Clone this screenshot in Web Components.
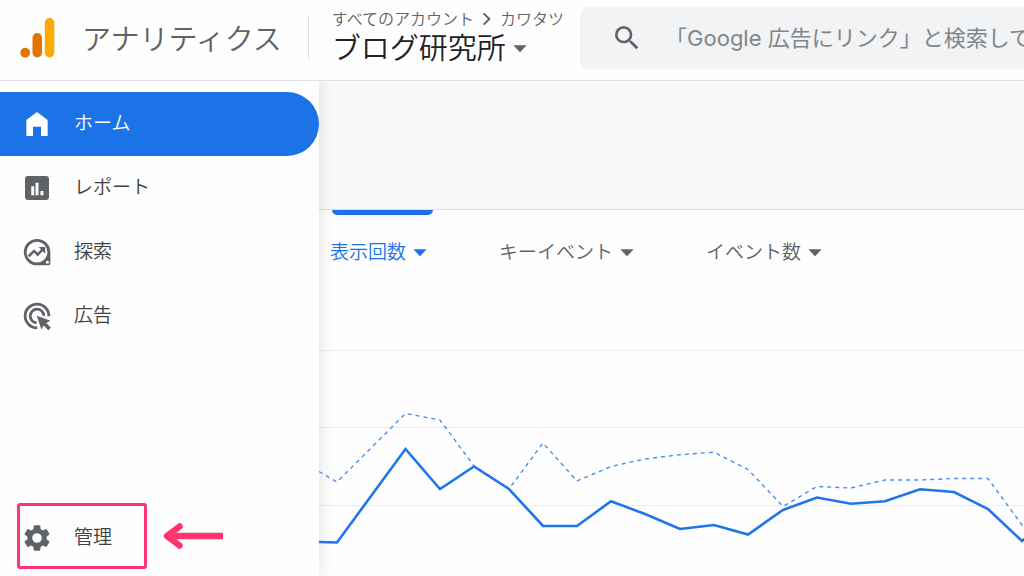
<!DOCTYPE html>
<html lang="ja">
<head>
<meta charset="utf-8">
<meta name="viewport" content="width=device-width, initial-scale=1">
<title>アナリティクス</title>
<style>
  html, body { height: 100%; margin: 0; }
  body {
    background: #fefefe;
    color: #3c4043;
    font-family: Inter, "Noto Sans CJK JP", sans-serif;
    font-weight: 350;
    overflow: hidden;
  }
</style>
</head>
<body>
<ga-app></ga-app>

<script>
class Base extends HTMLElement {
  connectedCallback() {
    if (this.shadowRoot) return;
    this.attachShadow({ mode: 'open' }).innerHTML = this.render();
  }
}

const ICONS = {
  home: '<path d="M12 3 4 9v12h5v-7h6v7h5V9z"/>',
  report: '<path d="M19 3H5c-1.1 0-2 .9-2 2v14c0 1.1.9 2 2 2h14c1.1 0 2-.9 2-2V5c0-1.1-.9-2-2-2zM9.900 17.500H7.700v-6.800h2.200zm3.200 0h-2.200V8h2.200zm3.700 0h-2.200v-3.300h2.200z"/>',
  explore: '<path fill-rule="evenodd" d="M12 2.200a9.900 9.900 0 1 0 0 19.800h8.700c.8 0 1.300-.5 1.300-1.300V12.100A9.950 9.950 0 0 0 12 2.200zm0 2.100a7.800 7.800 0 1 1 0 15.600 7.800 7.800 0 0 1 0-15.600zm7.800 14.200a1.200 1.200 0 1 1 0 2.400 1.200 1.200 0 0 1 0-2.400z"/><path d="m5.800 15.200 4-4 2.700 2.800 4.300-4.600" fill="none" stroke="currentColor" stroke-width="1.900"/><path d="M13.200 8.300h5v5z"/>',
  ads: '<g fill="none" stroke="currentColor" stroke-width="2.100"><path d="M20.900 12.200A8.900 8.900 0 1 0 12.200 20.900"/><path d="M17.100 11.800A5.100 5.100 0 1 0 11.700 17.100"/></g><path d="m11.800 11.800 10.300 3.700-3.200 1.700 3.500 3.500-1.900 1.900-3.500-3.500-1.700 3.100z"/>',
  settings: '<path d="M19.140 12.940c.04-.3.06-.61.06-.94 0-.32-.02-.64-.07-.94l2.030-1.580a.49.49 0 0 0 .12-.61l-1.920-3.320a.488.488 0 0 0-.59-.22l-2.390.96c-.5-.38-1.030-.7-1.620-.94l-.36-2.540a.484.484 0 0 0-.48-.41h-3.840c-.24 0-.43.17-.47.41l-.36 2.540c-.59.24-1.130.57-1.620.94l-2.390-.96c-.22-.08-.47 0-.59.22L2.740 8.870c-.12.21-.08.47.12.61l2.030 1.580c-.05.3-.09.63-.09.94s.02.64.07.94l-2.030 1.580a.49.49 0 0 0-.12.61l1.920 3.320c.12.22.37.29.59.22l2.390-.96c.5.38 1.030.7 1.620.94l.36 2.540c.05.24.24.41.48.41h3.840c.24 0 .44-.17.47-.41l.36-2.540c.59-.24 1.130-.56 1.620-.94l2.390.96c.22.08.47 0 .59-.22l1.920-3.320c.12-.22.07-.47-.12-.61l-2.010-1.580zM12 15.600A3.600 3.600 0 1 1 12 8.400a3.600 3.600 0 0 1 0 7.200z"/>',
  search: '<path d="M15.500 14h-.79l-.28-.27A6.471 6.471 0 0 0 16 9.500 6.500 6.500 0 1 0 9.500 16c1.610 0 3.090-.59 4.230-1.570l.27.28v.79l5 4.990L20.490 19l-4.990-5zm-6 0C7.010 14 5 11.990 5 9.500S7.010 5 9.500 5 14 7.010 14 9.500 11.990 14 9.500 14z"/>',
  chevron: '<path d="m7 3.500 8.500 8.500L7 20.500" fill="none" stroke="currentColor" stroke-width="3"/>',
  caret: '<path d="M2 6.500h20L12 17z"/>'
};

customElements.define('ga-icon', class extends Base {
  render() {
    return `<style>
      :host { display: block; flex: none; width: var(--size, 32px); height: var(--size, 32px); }
      svg { display: block; width: 100%; height: 100%; fill: currentColor; }
    </style><svg viewBox="0 0 24 24" aria-hidden="true">${ICONS[this.getAttribute('name')]}</svg>`;
  }
});

customElements.define('ga-brand', class extends Base {
  render() {
    return `<style>
      :host { display: flex; align-items: center; gap: 27px; padding: 0 26px 0 20px; color: #5f6368; }
      svg { display: block; flex: none; width: 35px; height: 40px; }
      span { padding-top: 4px; font-size: 29px; line-height: 40px; white-space: nowrap; }
    </style>
    <svg viewBox="0 0 35 40" aria-hidden="true">
      <circle cx="5.200" cy="34.700" r="4.900" fill="#e37400"/>
      <rect x="12.500" y="15" width="9.500" height="24.500" rx="4.700" fill="#e37400"/>
      <rect x="24.800" y="0" width="9.500" height="39.500" rx="4.700" fill="#f9ab00"/>
    </svg>
    <span><slot></slot></span>`;
  }
});

customElements.define('ga-property-picker', class extends Base {
  render() {
    return `<style>
      :host { display: flex; align-items: center; }
      :host::before { content: ""; width: 1px; height: 42px; background: #dadce0; }
      button {
        display: grid; justify-items: start; align-content: center; height: 64px; padding: 0 0 0 23px;
        border: 0; background: none;
        font: inherit; color: #202124; white-space: nowrap; cursor: pointer; text-align: left;
      }
      .path { display: flex; align-items: center; gap: 5px; font-size: 16px; line-height: 20px; color: #5f6368; }
      .name { display: flex; align-items: center; gap: 6px; padding-top: 2px; font-size: 29px; line-height: 36px; }
      ga-icon { --size: 16px; color: #5f6368; }
    </style>
    <button type="button" aria-haspopup="dialog">
      <span class="path"><slot name="account"></slot><ga-icon name="chevron"></ga-icon><slot name="owner"></slot></span>
      <span class="name"><slot></slot><ga-icon name="caret"></ga-icon></span>
    </button>`;
  }
});

customElements.define('ga-search', class extends Base {
  render() {
    return `<style>
      :host { display: block; min-width: 0; }
      label {
        display: flex; align-items: center; gap: 22px; height: 62px; padding-left: 31px;
        background: #f1f3f4; border-radius: 8px 0 0 8px; color: #5f6368;
      }
      input {
        flex: 1; min-width: 0; height: 40px; padding: 0; border: 0; outline: 0; background: none;
        font: inherit; font-size: 22px; font-weight: 400; color: #3c4043;
      }
      input::placeholder { color: #80868b; opacity: 1; }
    </style>
    <label><ga-icon name="search"></ga-icon>
      <input type="text" aria-label="検索" placeholder="${this.getAttribute('placeholder')}"></label>`;
  }
});

customElements.define('ga-header', class extends Base {
  render() {
    return `<style>
      :host {
        display: grid; grid-template-columns: auto auto 1fr; align-items: center;
        height: 80px; box-sizing: border-box; padding-bottom: 4px;
        background: #fefefe; box-shadow: 0 1px #dfe1e8; position: relative; z-index: 2;
      }
      ga-search { margin-left: 16px; }
    </style>
    <ga-brand>アナリティクス</ga-brand>
    <ga-property-picker><span slot="account">すべてのアカウント</span><span slot="owner">カワタツ</span>ブログ研究所</ga-property-picker>
    <ga-search placeholder="「Google 広告にリンク」と検索して"></ga-search>`;
  }
});

customElements.define('ga-nav-item', class extends Base {
  render() {
    return `<style>
      :host { display: block; position: relative; }
      a {
        display: flex; align-items: center; gap: 21px; height: 64px; padding-left: 21px;
        color: #5f6368; text-decoration: none; border-radius: 0 32px 32px 0;
      }
      span { font-size: 19px; line-height: 28px; color: #3c4043; }
      :host([active]) a { background: #1c73e8; color: #fff; }
      :host([active]) span { color: #fff; }
    </style>
    <a href="#${this.getAttribute('icon')}"${this.hasAttribute('active') ? ' aria-current="page"' : ''}>
      <ga-icon name="${this.getAttribute('icon')}"></ga-icon><span><slot></slot></span></a>
    <slot name="callout"></slot>`;
  }
});

customElements.define('ga-callout', class extends Base {
  render() {
    return `<style>
      :host { position: absolute; left: 17px; top: -3px; display: flex; align-items: center; gap: 16px; pointer-events: none; }
      .frame { box-sizing: border-box; width: 130px; height: 66px; border: 3px solid #ff3571; border-radius: 3px; }
      svg { display: block; width: 62px; height: 28px; }
    </style>
    <div class="frame"></div>
    <svg viewBox="0 0 62 28" fill="none" stroke="#ff3571" stroke-width="6.500" aria-hidden="true">
      <path d="M4 14h56"/><path d="M16.500 4.500 4 14l12.500 9.500" stroke-linecap="round" stroke-linejoin="round"/>
    </svg>`;
  }
});

customElements.define('ga-sidebar', class extends Base {
  render() {
    return `<style>
      :host { display: block; background: #fefefe; box-shadow: 0 0 14px rgba(60,64,67,.16); position: relative; z-index: 1; }
      nav { display: flex; flex-direction: column; box-sizing: border-box; height: 100%; padding: 12px 0 6px; }
      .last { margin-top: auto; }
    </style>
    <nav aria-label="メイン">
      <ga-nav-item icon="home" active>ホーム</ga-nav-item>
      <ga-nav-item icon="report">レポート</ga-nav-item>
      <ga-nav-item icon="explore">探索</ga-nav-item>
      <ga-nav-item icon="ads">広告</ga-nav-item>
      <ga-nav-item class="last" icon="settings">管理<ga-callout slot="callout"></ga-callout></ga-nav-item>
    </nav>`;
  }
});

customElements.define('ga-metric-tab', class extends Base {
  render() {
    return `<style>
      :host { display: block; color: #5f6368; }
      :host([active]) { color: #1a73e8; }
      button {
        display: flex; align-items: center; gap: 6px; height: 86px; padding: 0;
        border: 0; background: none; font: inherit; font-size: 19px; line-height: 28px;
        color: inherit; white-space: nowrap; cursor: pointer; position: relative;
      }
      ga-icon { --size: 16px; }
      :host([active]) button::before {
        content: ""; position: absolute; top: 0; left: 2px; right: -5px; height: 5px;
        background: #1a73e8; border-radius: 0 0 5px 5px;
      }
    </style>
    <button type="button" aria-haspopup="menu"><slot></slot><ga-icon name="caret"></ga-icon></button>`;
  }
});

customElements.define('ga-line-chart', class extends Base {
  render() {
    const now = '-1,252 17,252.500 85.500,159 120,199 154,176.500 189,199 223,236 257,236 291,211.200 325,224 360,239 394,235 428,244.500 463,220 497,207.500 531,213.800 565,211.200 600,199.300 634,202 668,219 702,251 710,245';
    const prev = '-1,181.500 17,192 85.500,123.500 120,130 154,176 189,199 223,153 257,191 291,176.500 325,169 360,164.700 394,162.200 428,179.500 463,216.500 497,196.500 531,198 565,190 600,190 634,188.500 668,188.500 702,235 710,238';
    return `<style>
      :host { display: block; flex: 1; min-height: 0; }
      svg { display: block; width: 100%; height: 100%; }
    </style>
    <svg viewBox="-1 0 705 286" preserveAspectRatio="xMinYMin slice" role="img" aria-label="表示回数の推移" fill="none">
      <path d="M-1 60.500h705M-1 137.500h705M-1 215.500h705" stroke="#ececec"/>
      <polyline points="${prev}" stroke="#4a8df0" stroke-width="1.400" stroke-dasharray="4 4"/>
      <polyline points="${now}" stroke="#1f76eb" stroke-width="2.600"/>
    </svg>`;
  }
});

customElements.define('ga-main', class extends Base {
  render() {
    return `<style>
      :host { display: flex; flex-direction: column; min-width: 0; min-height: 0; }
      .toolbar { flex: none; box-sizing: border-box; height: 130px; background: #f9f9f9; border-bottom: 1px solid #dcdcde; }
      .tabs { flex: none; display: flex; gap: 71px; height: 80px; padding-left: 11px; }
    </style>
    <div class="toolbar"></div>
    <div class="tabs">
      <ga-metric-tab active>表示回数</ga-metric-tab>
      <ga-metric-tab>キーイベント</ga-metric-tab>
      <ga-metric-tab>イベント数</ga-metric-tab>
    </div>
    <ga-line-chart></ga-line-chart>`;
  }
});

customElements.define('ga-app', class extends Base {
  render() {
    return `<style>
      :host { display: grid; grid-template: auto minmax(0, 1fr) / 319px minmax(0, 1fr); height: 100vh; }
      ga-header { grid-column: 1 / -1; }
    </style>
    <ga-header></ga-header>
    <ga-sidebar></ga-sidebar>
    <ga-main></ga-main>`;
  }
});
</script>
</body>
</html>
